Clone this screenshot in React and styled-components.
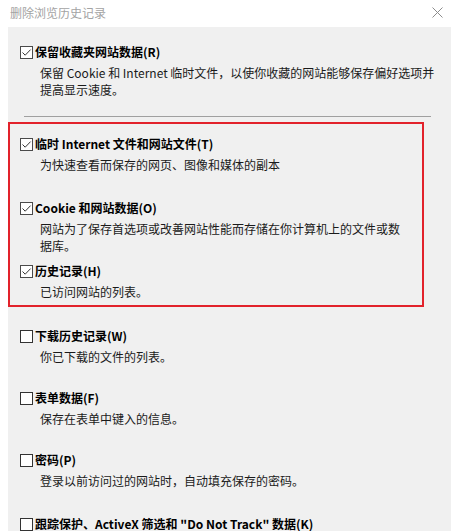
import styled, { createGlobalStyle } from 'styled-components';

const GlobalStyle = createGlobalStyle`
  html, body {
    margin: 0;
    padding: 0;
    background: #fff;
  }
  body {
    font-family: "Noto Sans CJK SC", "Noto Sans", sans-serif;
    color: #000;
  }
`;

const Dialog = styled.div`
  width: 463px;
  height: 531px;
  overflow: hidden;
  background: #fff;
`;

const TitleBar = styled.div`
  height: 27px;
  display: flex;
  align-items: center;
  justify-content: space-between;
  padding: 0 20px 2px 10px;
  box-sizing: border-box;
`;

const Title = styled.span`
  font-size: 12px;
  color: #a3a3a3;
  line-height: 16px;
`;

const CloseButton = styled.button`
  width: 12px;
  height: 12px;
  padding: 0;
  border: none;
  background: none;
  display: flex;
  align-items: center;
  justify-content: center;
`;

const Panel = styled.div`
  margin-left: 8px;
  width: 443px;
  min-height: 504px;
  background: #f0f0f0;
  padding: 15px 0 0 12px;
  box-sizing: border-box;
`;

const Separator = styled.hr`
  margin: 18px 20px 0 4px;
  border: none;
  border-top: 1px solid #a0a0a0;
  height: 0;
`;

const Highlight = styled.div`
  margin: 5px 0 19px -12px;
  width: 416px;
  box-sizing: border-box;
  border: 2px solid #e2222b;
  padding: 10px 0 5px 10px;
`;

const Item = styled.div`
  margin-bottom: ${({ $gap }) => $gap}px;
`;

const LabelRow = styled.label`
  display: flex;
  align-items: center;
  gap: 2px;
  height: 20px;
  font-size: 12px;
  font-weight: 700;
  line-height: 20px;
  color: #000;
  white-space: nowrap;
`;

const Box = styled.span`
  width: 13px;
  height: 13px;
  box-sizing: border-box;
  border: 1px solid ${({ $checked }) => ($checked ? '#4a4a4a' : '#333')};
  background: #fff;
  display: flex;
  align-items: center;
  justify-content: center;
  flex-shrink: 0;
`;

const Desc = styled.div`
  margin: 2px 0 0 20px;
  font-size: 12px;
  line-height: 17px;
  color: #1a1a1a;
  white-space: nowrap;
`;

const CheckMark = () => (
  <svg width="11" height="11" viewBox="0 0 11 11">
    <path d="M1.5 5.5 L4.2 8.2 L9.6 2.6" fill="none" stroke="#333" strokeWidth="1" />
  </svg>
);

const Option = ({ label, lines = [], checked, gap = 0 }) => (
  <Item $gap={gap}>
    <LabelRow>
      <Box $checked={checked}>{checked && <CheckMark />}</Box>
      {label}
    </LabelRow>
    {lines.length > 0 && (
      <Desc>
        {lines.map((line, i) => (
          <div key={i}>{line}</div>
        ))}
      </Desc>
    )}
  </Item>
);

const App = () => {
  return (
    <Dialog>
      <GlobalStyle />
      <TitleBar>
        <Title>删除浏览历史记录</Title>
        <CloseButton aria-label="关闭">
          <svg width="11" height="11" viewBox="0 0 11 11">
            <path d="M0.5 0.5 L10.5 10.5 M10.5 0.5 L0.5 10.5" stroke="#8c8c8c" strokeWidth="1" />
          </svg>
        </CloseButton>
      </TitleBar>
      <Panel>
        <Option
          checked
          label="保留收藏夹网站数据(R)"
          lines={['保留 Cookie 和 Internet 临时文件，以使你收藏的网站能够保存偏好选项并', '提高显示速度。']}
        />
        <Separator />
        <Highlight>
          <Option
            checked
            gap={25}
            label="临时 Internet 文件和网站文件(T)"
            lines={['为快速查看而保存的网页、图像和媒体的副本']}
          />
          <Option
            checked
            gap={7}
            label="Cookie 和网站数据(O)"
            lines={['网站为了保存首选项或改善网站性能而存储在你计算机上的文件或数', '据库。']}
          />
          <Option checked label="历史记录(H)" lines={['已访问网站的列表。']} />
        </Highlight>
        <Option gap={23} label="下载历史记录(W)" lines={['你已下载的文件的列表。']} />
        <Option gap={23} label="表单数据(F)" lines={['保存在表单中键入的信息。']} />
        <Option gap={25} label="密码(P)" lines={['登录以前访问过的网站时，自动填充保存的密码。']} />
        <Option label={'跟踪保护、ActiveX 筛选和 "Do Not Track" 数据(K)'} />
      </Panel>
    </Dialog>
  );
};

export default App;
